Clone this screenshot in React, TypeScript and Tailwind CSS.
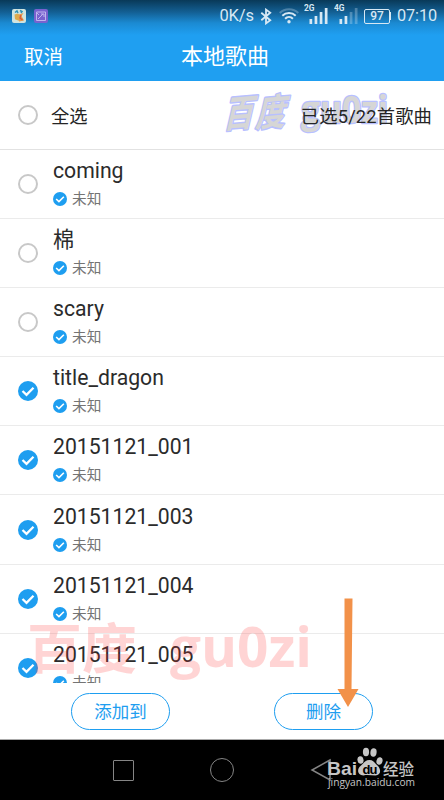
import React, { useState } from 'react';

interface Song {
  title: string;
  artist: string;
}

const SONGS: Song[] = [
  { title: 'coming', artist: '未知' },
  { title: '棉', artist: '未知' },
  { title: 'scary', artist: '未知' },
  { title: 'title_dragon', artist: '未知' },
  { title: '20151121_001', artist: '未知' },
  { title: '20151121_003', artist: '未知' },
  { title: '20151121_004', artist: '未知' },
  { title: '20151121_005', artist: '未知' },
];

const TOTAL_SONGS = 22;

// ── Icons ───────────────────────────────────────────────────────
function CheckBadge({ className }: { className: string }) {
  return (
    <svg viewBox="0 0 20 20" className={className}>
      <circle cx="10" cy="10" r="10" fill="#1e9ef0" />
      <path d="M4.500 10 8.500 13.800 15.500 6.800" fill="none" stroke="#fff" strokeWidth="2.300" />
    </svg>
  );
}

function SelectMark({ checked }: { checked: boolean }) {
  if (checked) return <CheckBadge className="h-5 w-5 shrink-0" />;
  return <span className="h-5 w-5 shrink-0 rounded-full border-2 border-[#c8c8c8]" />;
}

function BluetoothIcon() {
  return (
    <svg viewBox="0 0 12 18" className="ml-[6px] h-[17px] w-3" fill="none" stroke="#d7e8f4" strokeWidth="1.900">
      <path d="M1 5 10.500 13 6 16.300V1.700L10.500 5 1 13" />
    </svg>
  );
}

function WifiIcon() {
  return (
    <svg viewBox="0 0 20 16" className="ml-[7px] h-4 w-5" fill="none" stroke="#d7e8f4" strokeWidth="2">
      <path d="M.7 5C5.700-.1 14.300-.1 19.300 5" opacity=".3" />
      <path d="M3.300 7.700c3.800-3.700 9.600-3.700 13.400 0M6.100 10.700c2.200-2.200 5.600-2.200 7.800 0" />
      <circle cx="10" cy="13.700" r="1.700" fill="#d7e8f4" stroke="none" />
    </svg>
  );
}

function SignalIcon({ label, dimFrom }: { label: string; dimFrom: number }) {
  return (
    <svg viewBox="0 0 24 22" className="h-[22px] w-6" fill="#d7e8f4">
      <text x="0" y="8" fontSize="8.500" fontWeight="700" fontFamily="Roboto, sans-serif" textLength="10.500" lengthAdjust="spacingAndGlyphs">
        {label}
      </text>
      {[5, 8, 12, 16].map((h, i) => (
        <rect key={h} x={5.500 + i * 5.100} y={21 - h} width="2.700" height={h} opacity={i >= dimFrom ? 0.3 : 1} />
      ))}
    </svg>
  );
}

// ── Header ──────────────────────────────────────────────────────
function StatusBar() {
  return (
    <div className="flex h-8 items-center pl-3 pr-[7px] text-[#d7e8f4]">
      <svg viewBox="0 0 14 14" className="h-3.5 w-3.5">
        <rect width="14" height="14" rx="2" fill="#d0e4df" />
        <path d="M2.500 5.500 6 4.500l2 2v5.800l-5-2z" fill="#dfaa4b" />
        <path d="M7 5.500 11.500 4l-2 3 2.500 4.500-5 1z" fill="#e79a48" />
        <path d="m9 6-1 3 2.500 2" stroke="#d5583e" strokeWidth="1.200" fill="none" />
        <path d="m3 3.500 2-1.500 1 2M8 1.500l2 1-1 1.500" stroke="#2f91b5" strokeWidth="1.500" fill="none" />
      </svg>
      <svg viewBox="0 0 14 14" className="ml-2 h-3.5 w-3.5" fill="none" stroke="#bfb5ee" strokeWidth="1">
        <rect width="14" height="14" rx="2" fill="#7962cf" stroke="none" />
        <path d="M2.500 3v8.500h9V3zM4 10l5-5M7 5h3v3M3 4l2 2" />
      </svg>
      <span className="ml-auto font-[Roboto,sans-serif] text-[16.500px] leading-none tracking-[-0.100px]">0K/s</span>
      <BluetoothIcon />
      <WifiIcon />
      <div className="-mt-[4px] ml-[5px] flex gap-[6px]">
        <SignalIcon label="2G" dimFrom={4} />
        <SignalIcon label="4G" dimFrom={2} />
      </div>
      <div className="ml-[6px] flex items-center">
        <span className="flex h-[15px] w-[26px] items-center justify-center rounded-[2px] border border-[#d7e8f4] font-[Roboto,sans-serif] text-[12px] font-medium leading-none">
          97
        </span>
        <span className="h-2 w-px bg-[#d7e8f4]" />
      </div>
      <span className="ml-[6px] font-[Roboto,sans-serif] text-[16.300px] leading-none tracking-[-0.100px]">07:10</span>
    </div>
  );
}

function Header() {
  return (
    <header className="h-[81px] bg-[linear-gradient(to_bottom,#093958_0px,#135f93_12px,#1b8ad2_23px,#1f9ff1_35px)] text-white">
      <StatusBar />
      <div className="grid h-12 grid-cols-[1fr_auto_1fr] items-center px-6">
        <button className="mt-[3px] justify-self-start text-[19.500px] leading-none">取消</button>
        <h1 className="ml-[6px] mt-px text-[22px] leading-none">本地歌曲</h1>
      </div>
    </header>
  );
}

// ── Song row ────────────────────────────────────────────────────
function SongRow({ song, checked, onToggle }: { song: Song; checked: boolean; onToggle: () => void }) {
  return (
    <li onClick={onToggle} className="flex h-[69.100px] shrink-0 items-center border-b border-[#ebebeb] pl-[18.400px]">
      <SelectMark checked={checked} />
      <div className="ml-[14.600px] flex flex-col">
        <span className="h-[27px] text-[21.200px] leading-[27px] text-[#2b2b2b]">{song.title}</span>
        <span className="mt-[3px] flex h-6 items-center gap-[5px] text-[14.700px] leading-6 text-[#747474]">
          <CheckBadge className="h-3.5 w-3.5" />
          {song.artist}
        </span>
      </div>
    </li>
  );
}

// ── Overlays ────────────────────────────────────────────────────
function Annotations() {
  return (
    <svg viewBox="0 0 444 800" className="pointer-events-none absolute inset-0 h-[800px] w-[444px]">
      <g fontFamily="'Open Sans', 'Noto Sans CJK SC', sans-serif" fontWeight="700" fill="#ff3030" opacity=".2">
        <text x="27" y="668.500" fontSize="54" textLength="110" lengthAdjust="spacingAndGlyphs">百度</text>
        <text x="170" y="666.500" fontSize="56" textLength="142" lengthAdjust="spacingAndGlyphs">gu0zi</text>
      </g>
      <path d="M344.500 598.500h8l-1 90.500h7l-10.500 18-10.500-18h7z" fill="#f29149" />
    </svg>
  );
}

function TopWatermark() {
  return (
    <svg
      viewBox="0 0 180 54"
      className="pointer-events-none absolute left-[214px] top-[3px] h-[54px] w-[180px]"
      fill="#d6d6d6"
      stroke="#b8c0ff"
      strokeLinejoin="round"
      paintOrder="stroke"
      fontWeight="700"
    >
      <g fontFamily="'Noto Sans CJK SC', sans-serif" fontSize="34" strokeWidth="2.600">
        <text transform="translate(9 44) rotate(-5) skewX(-18) scale(.88 1.080)">百</text>
        <text transform="translate(41 43) rotate(-5) skewX(-18) scale(.88 1.080)">度</text>
      </g>
      <text x="87" y="38.500" fontSize="37" strokeWidth="2.600" fontFamily="'Open Sans', sans-serif" textLength="87" lengthAdjust="spacingAndGlyphs">
        gu0zi
      </text>
    </svg>
  );
}

function BaiduLogo() {
  return (
    <svg viewBox="0 0 100 50" className="absolute left-[324px] top-[3px] h-[50px] w-[100px]" fill="#c6c6c6">
      <text x="3" y="32" fontSize="19" fontWeight="700" fontFamily="'Liberation Sans', sans-serif" textLength="30" lengthAdjust="spacingAndGlyphs">
        Bai
      </text>
      <ellipse cx="36.500" cy="17" rx="3" ry="3.800" transform="rotate(-12 36.500 17)" />
      <ellipse cx="42" cy="9" rx="3.100" ry="4.200" />
      <ellipse cx="49.500" cy="9.500" rx="3.100" ry="4.200" transform="rotate(8 49.500 9.500)" />
      <ellipse cx="55.500" cy="18" rx="3" ry="3.800" transform="rotate(15 55.500 18)" />
      <path d="M45.500 17c4 0 5 3 8 5.500 4 4 3.500 9.500-2 10-4 0-8-1-12 0-6 0-7-6-3-9.500 3-2.500 4.500-6 9-6z" />
      <text x="38.500" y="31" fontSize="13" fontWeight="700" fill="#000" fontFamily="'Liberation Sans', sans-serif" textLength="15">
        du
      </text>
      <text x="59" y="31.500" fontSize="16" fontWeight="500" fontFamily="'Noto Sans CJK SC', sans-serif" textLength="31" lengthAdjust="spacingAndGlyphs">
        经验
      </text>
      <text x="4" y="43" fontSize="10" fontFamily="'Open Sans', sans-serif" textLength="87" lengthAdjust="spacingAndGlyphs">
        jingyan.baidu.com
      </text>
    </svg>
  );
}

export default function App() {
  const [selected, setSelected] = useState<number[]>([3, 4, 5, 6, 7]);

  const toggle = (index: number) => {
    setSelected((prev) => (prev.includes(index) ? prev.filter((i) => i !== index) : [...prev, index]));
  };

  return (
    <div className="relative flex h-[800px] w-[444px] flex-col overflow-hidden bg-white font-[Roboto,'Noto_Sans_CJK_SC',sans-serif]">
      <Header />

      {/* ── Select all ─────────────────────────────────────────── */}
      <div className="relative flex h-[69px] shrink-0 items-center border-b border-[#e2e2e2] pl-[18px] pr-3 text-[18.300px] text-[#252525]">
        <TopWatermark />
        <SelectMark checked={false} />
        <span className="ml-[13px] mt-[3px]">全选</span>
        <span className="relative ml-auto mt-[3px] tracking-[0.150px]">已选{selected.length}/{TOTAL_SONGS}首歌曲</span>
      </div>

      {/* ── Songs ──────────────────────────────────────────────── */}
      <ul className="flex h-[533px] shrink-0 flex-col overflow-hidden">
        {SONGS.map((song, i) => (
          <SongRow key={song.title} song={song} checked={selected.includes(i)} onToggle={() => toggle(i)} />
        ))}
      </ul>

      {/* ── Actions ────────────────────────────────────────────── */}
      <div className="flex h-[57px] shrink-0 justify-between border-b border-[#aaa] pl-[71px] pr-[71px] pt-[10px] text-[17.500px] text-[#1e9ef0]">
        <button className="h-[37px] w-[99px] rounded-full border-[1.500px] border-[#1e9ef0] pt-px">添加到</button>
        <button className="h-[37px] w-[99px] rounded-full border-[1.500px] border-[#1e9ef0] pt-px">删除</button>
      </div>

      {/* ── Navigation bar ─────────────────────────────────────── */}
      <nav className="relative flex h-[60px] shrink-0 items-center bg-black pl-[113px] text-[#858585]">
        <span className="h-[21px] w-[21px] rounded-[1px] border-[1.500px] border-current" />
        <span className="ml-[76px] h-6 w-6 rounded-full border-[1.500px] border-current" />
        <svg viewBox="0 0 22 24" className="ml-[76px] h-6 w-[22px]" fill="none" stroke="currentColor" strokeWidth="1.500">
          <path d="M20 2 2 12l18 10z" />
        </svg>
        <BaiduLogo />
      </nav>

      <Annotations />
    </div>
  );
}
